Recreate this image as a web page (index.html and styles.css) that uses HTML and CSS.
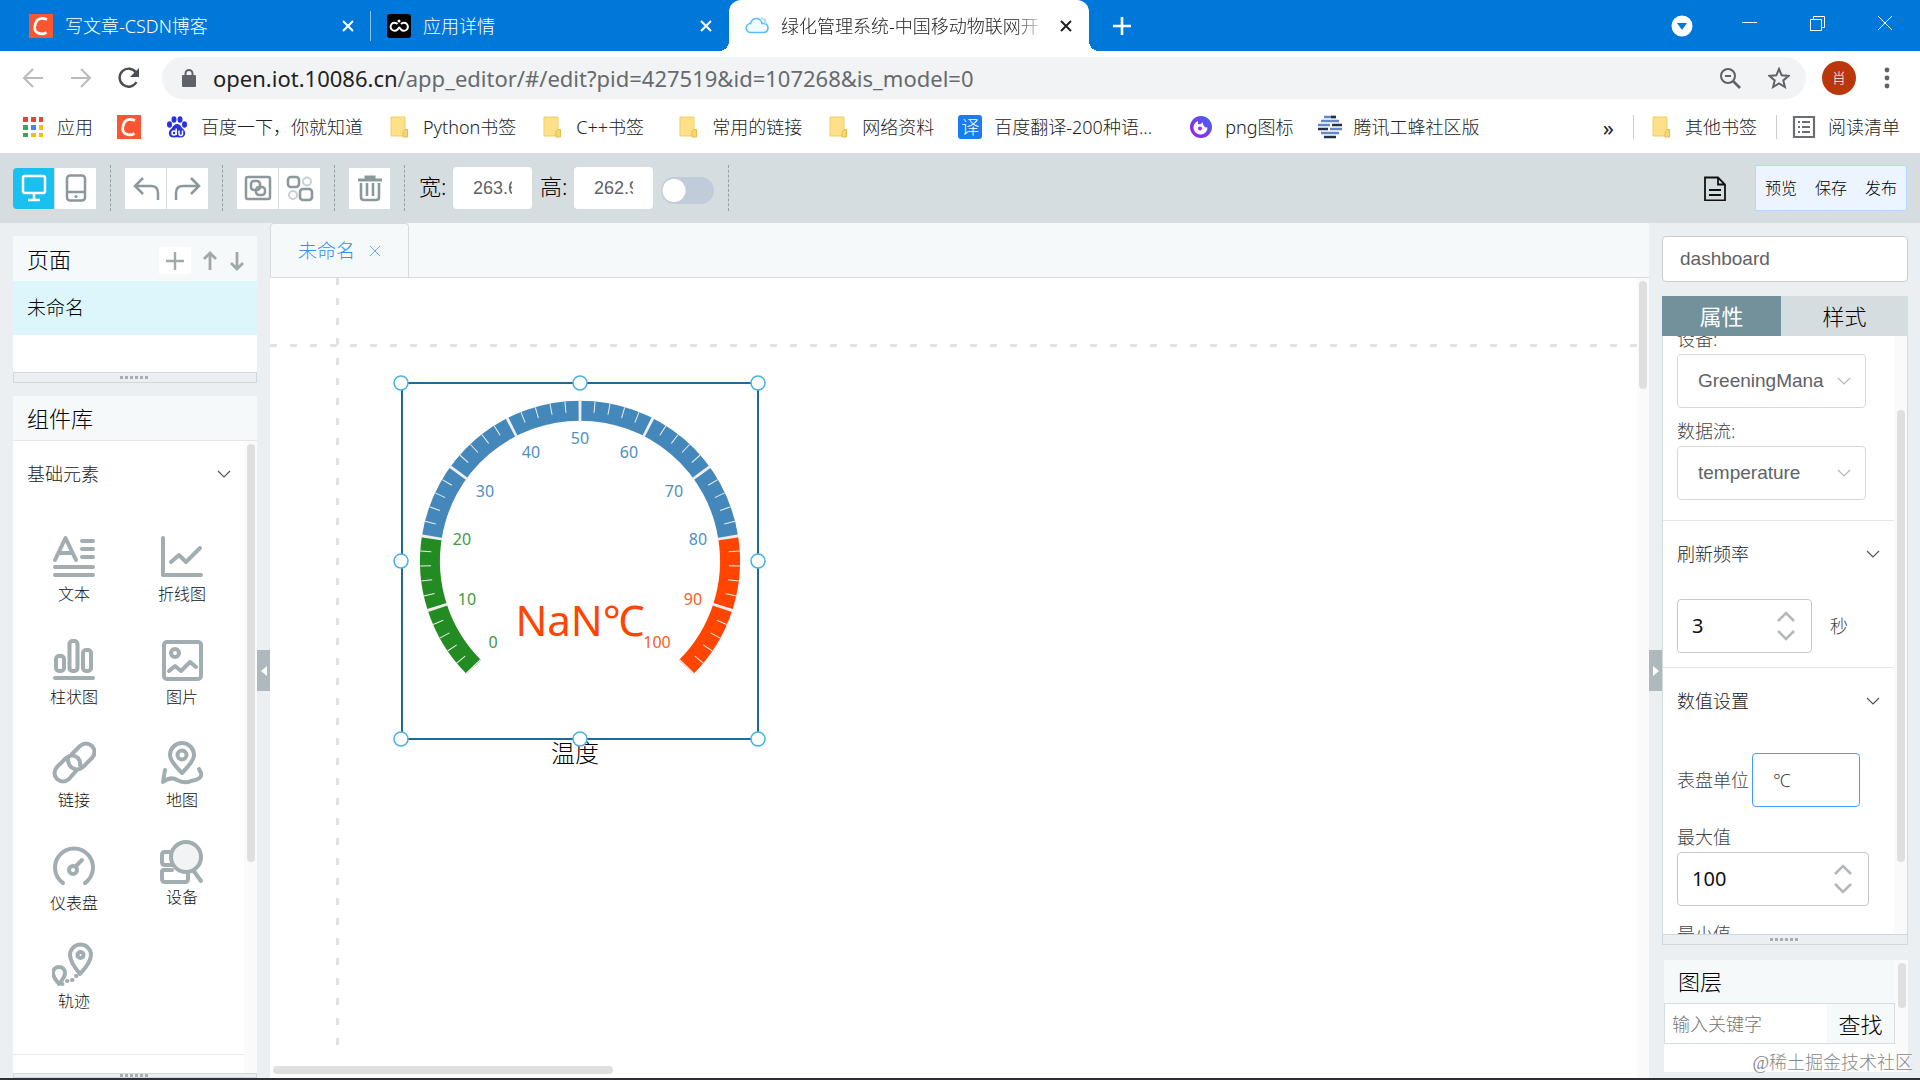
FILE: index.html
```html
<!DOCTYPE html>
<html lang="zh-CN">
<head>
    <meta charset="UTF-8">
    <meta name="viewport" content="width=device-width, initial-scale=1.0">
    <title>绿化管理系统-中国移动物联网开放平台</title>
    <link rel="stylesheet" href="styles.css">
</head>
<body>
    <!-- 公用图标 -->
    <svg class="symbols" aria-hidden="true">
        <symbol id="folder" viewBox="0 0 24 24">
            <path d="M4 2h14v19H4z" fill="#ffe08a" stroke="#f0cd62"/>
            <path d="M18 14.500h2.500V22H16v-4q0-2 2-3.500z" fill="#f7d774" stroke="#e5bd4c"/>
        </symbol>
        <symbol id="close" viewBox="0 0 14 14">
            <path d="M2 2l10 10M12 2L2 12" fill="none" stroke="currentColor" stroke-width="2"/>
        </symbol>
        <symbol id="chevron" viewBox="0 0 14 8">
            <path d="M1 1l6 6 6-6" fill="none" stroke="currentColor" stroke-width="1.200"/>
        </symbol>
        <symbol id="csdn" viewBox="0 0 24 24">
            <path d="M0 0h24v24H0z" fill="#fc5531"/>
            <path d="M18 5.500Q9 2 6.500 9.500T9 19q4 2 8.500-.5" fill="none" stroke="#fff" stroke-width="2.600"/>
        </symbol>
    </svg>

    <!-- 浏览器标签栏 -->
    <div class="tabbar">
        <div class="tab tab-first">
            <svg class="icon24"><use href="#csdn"/></svg>
            <span class="tab-title">写文章-CSDN博客</span>
            <button class="tab-close" aria-label="关闭"><svg><use href="#close"/></svg></button>
        </div>
        <div class="tab">
            <svg class="icon24" viewBox="0 0 24 24">
                <rect width="24" height="24" rx="3" fill="#000"/>
                <g fill="none" stroke="#fff" stroke-width="2"><path d="M10.500 10a4 4 0 1 0 0 5.500L12.500 13"/><path d="M14 10a4 4 0 1 1 0 5.500L12 13"/></g>
                <circle cx="12" cy="7" r="1.500" fill="#fff"/>
            </svg>
            <span class="tab-title">应用详情</span>
            <button class="tab-close" aria-label="关闭"><svg><use href="#close"/></svg></button>
        </div>
        <div class="tab tab-active">
            <svg class="icon24" viewBox="0 0 24 24">
                <path d="M6 18.500a4.500 4.500 0 0 1-.5-9Q7 4 12 4.500q4 .5 5 5 6-.5 6 4.500 0 4.500-5 4.500z" fill="#f2fbff" stroke="#59bdf0" stroke-width="1.600"/>
                <path d="M16 4l4 2 1 4" fill="none" stroke="#a8e4f5" stroke-width="2"/>
            </svg>
            <span class="tab-title">绿化管理系统-中国移动物联网开</span>
            <button class="tab-close" aria-label="关闭"><svg><use href="#close"/></svg></button>
        </div>
        <button class="new-tab" aria-label="新标签页"><svg viewBox="0 0 18 18"><path d="M9 0v18M0 9h18" stroke="#fff" stroke-width="2.600"/></svg></button>
        <div class="window-buttons">
            <button aria-label="搜索标签页"><svg viewBox="0 0 22 22"><circle cx="11" cy="11" r="10.500" fill="#fff"/><path d="M6 8h10l-5 7z" fill="#0078d9"/></svg></button>
            <button aria-label="最小化"><svg viewBox="0 0 22 22"><path d="M3 7.500h15" stroke="#fff"/></svg></button>
            <button aria-label="还原"><svg viewBox="0 0 22 22"><path d="M3.500 4.500h11v11h-11zM6.500 4V1.500h11v11H15" fill="none" stroke="#fff"/></svg></button>
            <button aria-label="关闭窗口"><svg viewBox="0 0 22 22"><path d="M3 1l14 14M17 1L3 15" stroke="#fff"/></svg></button>
        </div>
    </div>

    <!-- 地址栏 -->
    <div class="addressbar">
        <div class="nav">
            <button aria-label="后退"><svg viewBox="0 0 22 22"><path d="M21 11H2M11 2l-9 9 9 9" fill="none" stroke="#b8babd" stroke-width="2"/></svg></button>
            <button aria-label="前进"><svg viewBox="0 0 22 22"><path d="M1 11h19M11 2l9 9-9 9" fill="none" stroke="#b8babd" stroke-width="2"/></svg></button>
            <button aria-label="刷新"><svg viewBox="0 0 22 22"><path d="M18.500 15A9 9 0 1 1 18 5.500" fill="none" stroke="#4a4d51" stroke-width="2.400"/><path d="M21 1v9h-9z" fill="#4a4d51"/></svg></button>
        </div>
        <div class="url">
            <svg class="lock" viewBox="0 0 14 18"><path d="M1 7h12v10H1z" fill="#5f6368" stroke="#5f6368" stroke-width="2" stroke-linejoin="round"/><path d="M3.500 7V4.500a3.500 3.500 0 0 1 7 0V7" fill="none" stroke="#5f6368" stroke-width="2"/></svg>
            <p class="url-text"><b>open.iot.10086.cn</b>/app_editor/#/edit?pid=427519&amp;id=107268&amp;is_model=0</p>
            <button aria-label="缩放"><svg viewBox="0 0 22 22"><g fill="none" stroke="#5f6368" stroke-width="2"><circle cx="9" cy="9" r="7"/><path d="M6 9h6"/><path d="M14 14l7 7" stroke-width="2.600"/></g></svg></button>
            <button aria-label="收藏"><svg viewBox="0 0 22 22"><path d="M11 2l2.700 6.300 6.800.6-5.200 4.500 1.600 6.600-5.900-3.500L5.100 20l1.600-6.600-5.200-4.500 6.800-.6z" fill="none" stroke="#5f6368" stroke-width="2"/></svg></button>
        </div>
        <button class="avatar">肖</button>
        <button class="menu" aria-label="菜单"><svg viewBox="0 0 6 24"><g fill="#5f6368"><circle cx="3" cy="4" r="2.400"/><circle cx="3" cy="12" r="2.400"/><circle cx="3" cy="20" r="2.400"/></g></svg></button>
    </div>

    <!-- 书签栏 -->
    <nav class="bookmarks">
        <a href="#">
            <svg class="icon24" viewBox="0 0 24 24"><path d="M2 2h5v5H2zM10 2h5v5h-5zM18 2h4v5h-4z" fill="#ea4335"/><path d="M2 10h5v5H2zM2 18h5v4H2z" fill="#34a853"/><path d="M10 10h5v5h-5z" fill="#4285f4"/><path d="M18 10h4v5h-4zM10 18h5v4h-5zM18 18h4v4h-4z" fill="#fbbc05"/></svg>应用</a>
        <a href="#" aria-label="CSDN"><svg class="icon24"><use href="#csdn"/></svg></a>
        <a href="#">
            <svg class="icon24" viewBox="0 0 24 24"><g fill="#2932e1"><ellipse cx="4.500" cy="9.500" rx="2.500" ry="3.200"/><ellipse cx="9" cy="4.500" rx="2.500" ry="3.300"/><ellipse cx="15" cy="4.500" rx="2.500" ry="3.300"/><ellipse cx="19.500" cy="9.500" rx="2.500" ry="3.200"/><path d="M12 9q3 0 5 4 4 3 3 6.500-1 3.500-5 3-3-.6-6 0-4 .5-5-3Q3 16 7 13q2-4 5-4z"/></g><g fill="none" stroke="#fff" stroke-width="1.500"><circle cx="9" cy="18" r="2"/><path d="M11.200 13.500v6.500M14 15.500v3q0 2 2 2 1.500 0 1.500-2v-3"/></g></svg>百度一下，你就知道</a>
        <a href="#"><svg class="icon24"><use href="#folder"/></svg>Python书签</a>
        <a href="#"><svg class="icon24"><use href="#folder"/></svg><span class="short-name">C++书签</span></a>
        <a href="#"><svg class="icon24"><use href="#folder"/></svg>常用的链接</a>
        <a href="#"><svg class="icon24"><use href="#folder"/></svg>网络资料</a>
        <a href="#"><span class="fanyi">译</span><span class="long-name">百度翻译-200种语...</span></a>
        <a href="#">
            <svg class="icon24" viewBox="0 0 24 24"><defs><linearGradient id="pngFill" x1="1" y1="0" x2="0" y2="1"><stop offset="0" stop-color="#3d6bf0"/><stop offset="1" stop-color="#a516e8"/></linearGradient></defs><circle cx="12" cy="12" r="11" fill="url(#pngFill)"/><path d="M9 6a7 7 0 1 0 9.500 6.500q-4 .5-5-5.500-1.500 3-4.500 2z" fill="#fff"/><circle cx="11" cy="13.500" r="2" fill="#b326df"/></svg>png图标</a>
        <a href="#">
            <svg class="icon24" viewBox="0 0 24 24"><g stroke-width="2.500"><path d="M6 2h12M3 6h18M3 18h18" stroke="#6686c8"/><path d="M13 2h5M0 14h10M6 22h12M14 10h10" stroke="#263044"/><path d="M0 10h12M12 14h12" stroke="#6686c8"/></g></svg>腾讯工蜂社区版</a>
        <button class="more" aria-label="更多书签">»</button>
        <a class="divided" href="#"><svg class="icon24"><use href="#folder"/></svg>其他书签</a>
        <a class="divided" href="#"><svg class="icon24" viewBox="0 0 24 24"><path d="M2 2h20v20H2z" fill="none" stroke="#6b6e72" stroke-width="2.200"/><path d="M6 7h2M6 12h2M6 17h2M10 7h8M10 12h8M10 17h8" stroke="#6b6e72" stroke-width="2.200"/></svg>阅读清单</a>
    </nav>

    <!-- 编辑器工具栏 -->
    <header class="toolbar">
        <div class="tool-group">
            <button class="tool tool-on" aria-label="电脑"><svg viewBox="0 0 28 28"><g fill="none" stroke="#fff" stroke-width="2.500"><rect x="3" y="2" width="22" height="17" rx="2"/><path d="M14 19v7M8 26h12"/></g></svg></button>
            <button class="tool" aria-label="手机"><svg viewBox="0 0 28 28"><g fill="none" stroke="#8b999d" stroke-width="2.500"><rect x="5" y="1.500" width="18" height="25" rx="3"/><path d="M5 18h18"/></g><circle cx="14" cy="22.500" r="1.600" fill="#8b999d"/></svg></button>
        </div>
        <div class="tool-group">
            <button class="tool" aria-label="撤销"><svg viewBox="0 0 28 28"><path d="M11 4l-8 8 8 8M3 12h16q7 0 7 7v7" fill="none" stroke="#8b999d" stroke-width="2.500"/></svg></button>
            <button class="tool" aria-label="重做"><svg viewBox="0 0 28 28"><path d="M17 4l8 8-8 8M25 12H9q-7 0-7 7v7" fill="none" stroke="#8b999d" stroke-width="2.500"/></svg></button>
        </div>
        <div class="tool-group">
            <button class="tool" aria-label="组合"><svg viewBox="0 0 28 28"><g fill="none" stroke="#8b999d" stroke-width="2.500"><rect x="2" y="3" width="24" height="22" rx="2"/><rect x="7" y="7" width="9" height="9" rx="3"/><rect x="12" y="13" width="9" height="8" rx="3"/></g></svg></button>
            <button class="tool" aria-label="取消组合"><svg viewBox="0 0 28 28"><g fill="none" stroke="#8b999d" stroke-width="2.600"><rect x="2" y="3" width="11" height="10" rx="3"/><rect x="14" y="15" width="12" height="11" rx="3"/></g><g fill="none" stroke="#c9d0d2" stroke-width="2"><circle cx="21" cy="7.500" r="4"/><circle cx="7" cy="21" r="4"/></g></svg></button>
        </div>
        <div class="tool-group">
            <button class="tool" aria-label="删除"><svg viewBox="0 0 28 28"><path d="M2 6h24M10 5V3h8v2" fill="none" stroke="#8b999d" stroke-width="3"/><path d="M5 9v14q0 3 3 3h12q3 0 3-3V9M11 9v13M17 9v13" fill="none" stroke="#8b999d" stroke-width="2.600"/></svg></button>
        </div>
        <div class="tool-group size-group">
            <label for="width">宽:</label>
            <input type="text" id="width" value="263.6">
            <label for="height">高:</label>
            <input type="text" id="height" value="262.9">
            <input type="checkbox" class="switch" aria-label="锁定比例">
        </div>
        <button class="doc" aria-label="文档"><svg viewBox="0 0 24 26"><path d="M2 2.500h13l7 7v16H2zM15 2.500v7h7M6 15h12M6 20h12" fill="none" stroke="#111" stroke-width="1.800"/></svg></button>
        <div class="publish">
            <button>预览</button>
            <button>保存</button>
            <button>发布</button>
        </div>
    </header>

    <main class="editor">
        <!-- 左侧栏 -->
        <aside class="side side-left">
            <section class="panel">
                <div class="panel-head">
                    <h2>页面</h2>
                    <button class="add" aria-label="添加页面"><svg viewBox="0 0 20 20"><path d="M10 1v18M1 10h18" stroke="#a0a8aa" stroke-width="2.400"/></svg></button>
                    <button aria-label="上移"><svg viewBox="0 0 20 20"><path d="M10 19V2M4 8l6-6 6 6" fill="none" stroke="#a0a8aa" stroke-width="2.800"/></svg></button>
                    <button aria-label="下移"><svg viewBox="0 0 20 20"><path d="M10 1v17M4 12l6 6 6-6" fill="none" stroke="#a0a8aa" stroke-width="2.800"/></svg></button>
                </div>
                <ul class="pages">
                    <li>未命名</li>
                </ul>
                <div class="resize"></div>
            </section>

            <section class="panel library">
                <div class="panel-head"><h2>组件库</h2></div>
                <div class="scroll-area">
                    <div class="scroll-content">
                        <button class="fold">基础元素<svg><use href="#chevron"/></svg></button>
                        <div class="components">
                            <button><svg viewBox="0 0 44 44"><path d="M3 25L13.500 3 24 25M7 18h13M30 6h11M30 14h11M30 22h11M3 32h38M3 40h38"/></svg>文本</button>
                            <button><svg viewBox="0 0 44 44"><path d="M3 3v37h38M11 27l8-7 7 7 14-14"/></svg>折线图</button>
                            <button><svg viewBox="0 0 44 44"><rect x="4" y="18" width="8" height="15" rx="3"/><rect x="17.500" y="3" width="8" height="30" rx="3"/><rect x="31" y="12" width="8" height="21" rx="3"/><path d="M3 40h38"/></svg>柱状图</button>
                            <button><svg viewBox="0 0 44 44"><rect x="4" y="4" width="37" height="37" rx="3"/><circle cx="15" cy="15" r="4"/><path d="M9 33l6-5 6 5 9-9 6 5"/></svg>图片</button>
                            <button><svg viewBox="0 0 44 44"><path d="M20 13l8-8q6-5 12 0 5 6 0 12l-9 9q-6 5-12 0M24 30l-7 8q-6 5-12 0-5-6 0-12l9-9q6-5 12 0 3 4 2 7M16 18q0 5 3 8"/></svg>链接</button>
                            <button><svg viewBox="0 0 44 44"><path d="M22 32Q10 20 10 14a12 12 0 0 1 24 0q0 6-12 18zM5 29l-2 12q8-6 14-2 8 4 14 1 12-2 10-8l-2-4"/><circle cx="22" cy="14" r="4.500"/></svg>地图</button>
                            <button><svg viewBox="0 0 44 44"><path d="M11 39a19 19 0 1 1 22 0"/><circle cx="21" cy="26" r="4"/><path d="M24 22l6-6"/></svg>仪表盘</button>
                            <button class="raised"><svg viewBox="0 0 44 44"><path d="M12 12H5q-3 0-3 3v7q0 3 3 3h7M12 30H4q-2 0-2 2v7q0 3 3 3h20q3 0 3-3v-7M33 30l8 11"/><circle cx="26" cy="17" r="15" class="glass"/></svg>设备</button>
                            <button><svg viewBox="0 0 44 44"><path d="M28 32Q18 20 18 13a10.500 10.500 0 0 1 21 0q0 7-11 19z"/><circle cx="28.500" cy="13" r="3"/><path d="M7 42Q1 35 1 31a6 6 0 0 1 12 0q0 4-6 11z"/><path d="M10 42h.5M15 39h.5M20 38h.5M24 34h.5"/></svg>轨迹</button>
                        </div>
                    </div>
                    <div class="scrollbar"><div class="thumb thumb-library"></div></div>
                </div>
                <div class="resize resize-bottom"></div>
            </section>
        </aside>
        <div class="gutter"><button aria-label="收起左侧栏"><svg viewBox="0 0 8 12"><path d="M7 1v10L1 6z" fill="#fff"/></svg></button></div>

        <!-- 画布 -->
        <section class="stage">
            <div class="stage-tabs">
                <div class="stage-tab">未命名<button aria-label="关闭页面"><svg viewBox="0 0 12 12"><path d="M1 1l10 10M11 1L1 11" stroke="#66a8ea"/></svg></button></div>
            </div>
            <div class="canvas">
                <div class="guide guide-x"></div>
                <div class="guide guide-y"></div>
                <svg class="gauge" viewBox="0 0 380 400">
                    <rect x="12" y="12" width="356" height="356" class="frame"/>
                    <g fill="none" stroke-width="20">
                        <path d="M83.900 296.100A150 150 0 0 1 41.800 166.500" stroke="#228b22"/>
                        <path d="M41.800 166.500A150 150 0 0 1 338.200 166.500" stroke="#4488bb"/>
                        <path d="M338.200 166.500A150 150 0 0 1 296.100 296.100" stroke="#ff4500"/>
                    </g>
                    <!-- 小刻度与大刻度 -->
                    <path class="tick" d="M80.700 299.300A154.500 154.500 0 1 1 299.300 299.300" pathLength="500" stroke-width="11" stroke-dasharray="0.700 9.300" stroke-dashoffset="0.350"/>
                    <path class="tick" d="M83.900 296.100A150 150 0 1 1 296.100 296.100" pathLength="1000" stroke-width="22" stroke-dasharray="4 96" stroke-dashoffset="2"/>
                    <g class="marks">
                        <g fill="#3d9a3d">
                            <text x="103" y="277">0</text>
                            <text x="77" y="234">10</text>
                            <text x="72" y="174">20</text>
                        </g>
                        <g fill="#4e8fc0">
                            <text x="95" y="126">30</text>
                            <text x="141" y="87">40</text>
                            <text x="190" y="73">50</text>
                            <text x="239" y="87">60</text>
                            <text x="284" y="126">70</text>
                            <text x="308" y="174">80</text>
                        </g>
                        <g fill="#f75c22">
                            <text x="303" y="234">90</text>
                            <text x="267" y="277">100</text>
                        </g>
                    </g>
                    <text x="190" y="265" class="reading">NaN℃</text>
                    <text x="185" y="391" class="caption">温度</text>
                    <g class="handles">
                        <circle cx="11" cy="12" r="7"/><circle cx="190" cy="12" r="7"/><circle cx="368" cy="12" r="7"/>
                        <circle cx="11" cy="190" r="7"/><circle cx="368" cy="190" r="7"/>
                        <circle cx="11" cy="368" r="7"/><circle cx="190" cy="368" r="7"/><circle cx="368" cy="368" r="7"/>
                    </g>
                </svg>
                <div class="thumb thumb-y"></div>
                <div class="thumb thumb-x"></div>
            </div>
        </section>
        <div class="gutter"><button aria-label="收起右侧栏"><svg viewBox="0 0 8 12"><path d="M1 1v10l6-5z" fill="#fff"/></svg></button></div>

        <!-- 右侧栏 -->
        <aside class="side side-right">
            <input type="text" class="name" aria-label="组件名称" value="dashboard">
            <section class="props">
                <div class="prop-tabs">
                    <button class="on">属性</button>
                    <button>样式</button>
                </div>
                <div class="scroll-area">
                    <div class="scroll-content">
                        <div class="block block-source">
                            <label for="device">设备:</label>
                            <div class="select">
                                <select id="device"><option>GreeningMana</option></select>
                                <svg><use href="#chevron"/></svg>
                            </div>
                            <label for="stream">数据流:</label>
                            <div class="select">
                                <select id="stream"><option>temperature</option></select>
                                <svg><use href="#chevron"/></svg>
                            </div>
                        </div>
                        <div class="block">
                            <button class="fold">刷新频率<svg><use href="#chevron"/></svg></button>
                            <div class="field-row">
                                <div class="stepper stepper-short">
                                    <input type="text" id="rate" value="3">
                                    <svg viewBox="0 0 18 30"><path d="M1 10l8-8 8 8M1 20l8 8 8-8" fill="none" stroke="#b5b8bb" stroke-width="2.600"/></svg>
                                </div>
                                <label for="rate">秒</label>
                            </div>
                        </div>
                        <div class="block">
                            <button class="fold">数值设置<svg><use href="#chevron"/></svg></button>
                            <div class="field-row unit-row">
                                <label for="unit">表盘单位</label>
                                <input type="text" id="unit" value="℃">
                            </div>
                            <label for="max">最大值</label>
                            <div class="stepper">
                                <input type="text" id="max" value="100">
                                <svg viewBox="0 0 18 30"><path d="M1 10l8-8 8 8M1 20l8 8 8-8" fill="none" stroke="#b5b8bb" stroke-width="2.600"/></svg>
                            </div>
                            <label for="min">最小值</label>
                            <div class="stepper">
                                <input type="text" id="min">
                            </div>
                        </div>
                    </div>
                    <div class="scrollbar"><div class="thumb thumb-props"></div></div>
                </div>
                <div class="resize"></div>
            </section>
            <section class="layers">
                <div class="scroll-content">
                    <h2>图层</h2>
                    <div class="search">
                        <input type="text" placeholder="输入关键字" aria-label="输入关键字">
                        <button>查找</button>
                    </div>
                </div>
                <div class="scrollbar"><div class="thumb thumb-layers"></div></div>
            </section>
        </aside>
    </main>
    <p class="watermark">@稀土掘金技术社区</p>
</body>
</html>
```
FILE: styles.css
```css
/* 基础 */
* {
    box-sizing: border-box;
}

body {
    margin: 0;
    height: 100vh;
    display: flex;
    flex-direction: column;
    overflow: hidden;
    font-family: "Noto Sans", "Noto Sans CJK SC", sans-serif;
    font-size: 18px;
    font-weight: 300;
    line-height: 24px;
    color: #111;
    background: #ebeff2;
    border-bottom: 2px solid #2f3036;
}

button, input, select {
    font: inherit;
    color: inherit;
}

button {
    padding: 0;
    border: none;
    background: none;
    display: flex;
    align-items: center;
    justify-content: center;
}

h2, p, ul {
    margin: 0;
    padding: 0;
}

h2 {
    font-size: 22px;
    font-weight: 300;
    color: #000;
}

a {
    color: inherit;
    text-decoration: none;
}

.symbols {
    position: absolute;
    width: 0;
    height: 0;
}

.icon24 {
    width: 24px;
    height: 24px;
    flex: none;
}

/* 标签栏 */
.tabbar {
    display: flex;
    align-items: center;
    height: 51px;
    flex: none;
    background: #0078d9;
    color: #fff;
}

.tab {
    display: flex;
    align-items: center;
    gap: 12px;
    width: 358px;
    height: 51px;
    padding: 0 16px;
}

.tab-first {
    width: 371px;
    padding-left: 29px;
    background: linear-gradient(#8cc4f0, #8cc4f0) right center / 1px 30px no-repeat;
}

.tab-title {
    flex: 1;
    white-space: nowrap;
}

.tab-close svg {
    width: 14px;
    height: 14px;
}

.tab-active {
    position: relative;
    width: 360px;
    background: #fff;
    color: #222;
    border-radius: 12px 12px 0 0;
}

.tab-active .tab-title {
    -webkit-mask-image: linear-gradient(90deg, #000 88%, transparent);
    mask-image: linear-gradient(90deg, #000 88%, transparent);
}

.tab-active::before, .tab-active::after {
    content: "";
    position: absolute;
    bottom: 0;
    width: 10px;
    height: 10px;
}

.tab-active::before {
    left: -10px;
    background: radial-gradient(circle at 0 0, transparent 10px, #fff 10px);
}

.tab-active::after {
    right: -10px;
    background: radial-gradient(circle at 100% 0, transparent 10px, #fff 10px);
}

.new-tab {
    margin-left: 24px;
}

.new-tab svg {
    width: 18px;
    height: 18px;
}

.window-buttons {
    display: flex;
    margin-left: auto;
}

.window-buttons button {
    width: 68px;
    height: 50px;
}

.window-buttons svg {
    width: 22px;
    height: 22px;
}

/* 地址栏 */
.addressbar {
    display: flex;
    align-items: center;
    height: 54px;
    flex: none;
    padding: 0 30px 0 22px;
    background: #fff;
}

.nav {
    display: flex;
    gap: 26px;
    margin-right: 22px;
}

.nav svg, .url button svg {
    width: 22px;
    height: 22px;
}

.url {
    flex: 1;
    display: flex;
    align-items: center;
    gap: 27px;
    height: 42px;
    margin-right: 16px;
    padding: 0 16px 0 20px;
    border-radius: 21px;
    background: #f1f3f4;
}

.lock {
    width: 14px;
    height: 18px;
}

.url-text {
    flex: 1;
    margin-left: -10px;
    font-size: 22px;
    font-weight: 400;
    color: #666a6e;
}

.url-text b {
    font-weight: 400;
    color: #222;
}

.avatar {
    width: 34px;
    height: 34px;
    border-radius: 50%;
    background: #bb360b;
    color: #fff;
    font-size: 14px;
}

.menu {
    margin-left: 28px;
}

.menu svg {
    width: 6px;
    height: 24px;
}

/* 书签栏 */
.bookmarks {
    display: flex;
    align-items: center;
    gap: 24px;
    height: 48px;
    flex: none;
    padding: 0 20px 4px 21px;
    background: #fff;
    color: #222;
    white-space: nowrap;
}

.bookmarks a {
    display: flex;
    align-items: center;
    gap: 12px;
}

.fanyi {
    width: 24px;
    height: 24px;
    border-radius: 3px;
    background: #1b7cf2;
    color: #fff;
    text-align: center;
}

.short-name {
    width: 76px;
}

.long-name {
    width: 171px;
}

.more {
    margin-left: auto;
    font-size: 22px;
    font-weight: 400;
}

.bookmarks .divided {
    margin-left: -5px;
    padding-left: 16px;
    background: linear-gradient(#ccc, #ccc) left center / 1px 24px no-repeat;
}

/* 编辑器工具栏 */
.toolbar {
    display: flex;
    align-items: center;
    height: 70px;
    flex: none;
    padding: 0 13px;
    background: #d6dde0;
}

.tool-group {
    display: flex;
    align-items: center;
    gap: 1px;
    height: 46px;
    margin-right: 14px;
    padding-right: 14px;
    border-right: 1px dashed #98a0a3;
}

.tool {
    width: 41px;
    height: 41px;
    background: #fff;
}

.tool-on {
    border-radius: 4px 0 0 4px;
    background: #1ac0ef;
}

.tool svg {
    width: 28px;
    height: 28px;
}

.size-group {
    gap: 8px;
}

.size-group label {
    width: 26px;
    padding-bottom: 4px;
    font-size: 22px;
    color: #000;
    white-space: nowrap;
}

.size-group input[type="text"] {
    width: 79px;
    height: 42px;
    padding: 0 20px;
    border: none;
    border-radius: 4px;
    background: #fff;
    font-family: "Liberation Sans", sans-serif;
    color: #606266;
}

/* 锁定比例开关 */
.switch {
    appearance: none;
    width: 53px;
    height: 27px;
    margin: 4px 0 0;
    border-radius: 14px;
    background: radial-gradient(circle at 13px 50%, #fff 11px, transparent 12px) #c0ccda;
}

.doc {
    margin-left: auto;
    margin-right: 28px;
}

.doc svg {
    width: 24px;
    height: 26px;
}

.publish {
    display: flex;
    border: 1px solid #b3d8ff;
    border-radius: 0 3px 3px 0;
    background: #ecf5ff;
}

.publish button {
    width: 50px;
    height: 44px;
    font-size: 16px;
    color: #000;
}

/* 主体布局 */
.editor {
    flex: 1;
    display: flex;
    min-height: 0;
}

.side {
    display: flex;
    flex-direction: column;
    gap: 13px;
    flex: none;
    padding-top: 13px;
}

.side-left {
    width: 257px;
    padding-left: 13px;
}

.side-right {
    gap: 14px;
    width: 258px;
    padding-right: 12px;
}

.gutter {
    width: 13px;
    flex: none;
    display: flex;
    align-items: center;
}

.gutter button {
    width: 13px;
    height: 41px;
    margin-top: 40px;
    background: #adb9bd;
}

.gutter svg {
    width: 8px;
    height: 12px;
}

.resize {
    display: flex;
    align-items: center;
    justify-content: center;
    height: 11px;
    flex: none;
    border: 1px solid #cfd8dc;
    background: #ebeff2;
}

/* 拖动条上的小点 */
.resize::before {
    content: "";
    width: 30px;
    height: 3px;
    background: repeating-linear-gradient(90deg, #a9adb0 0 3px, transparent 3px 5px);
}

.resize-bottom {
    height: 5px;
}

/* 左侧面板 */
.panel-head {
    display: flex;
    align-items: center;
    height: 45px;
    flex: none;
    padding: 0 7px 0 14px;
    background: #f5f9fa;
}

.panel-head h2 {
    flex: 1;
}

.panel-head button {
    width: 27px;
    height: 27px;
    margin-top: 4px;
}

.panel-head .add {
    width: 32px;
    margin-right: 5px;
    background: #fff;
}

.panel-head svg {
    width: 20px;
    height: 20px;
}

.pages {
    height: 91px;
    background: #fff;
    list-style: none;
}

.pages li {
    height: 54px;
    padding-left: 14px;
    line-height: 54px;
    background: #dcf6fc;
    color: #000;
    font-size: 19px;
}

.library {
    flex: 1;
    display: flex;
    flex-direction: column;
    min-height: 0;
}

.library .panel-head {
    border-bottom: 1px solid #e2e8ea;
}

.scroll-area {
    flex: 1;
    display: flex;
    min-height: 0;
    overflow: hidden;
    background: #fff;
}

.scroll-content {
    flex: 1;
    min-width: 0;
}

.scrollbar {
    width: 13px;
    flex: none;
    padding: 3px 3px 0;
    background: #fafafa;
}

.thumb {
    width: 8px;
    border-radius: 4px;
    background: #dfdfdf;
}

.thumb-library {
    height: 418px;
}

.fold {
    width: 100%;
    height: 66px;
    padding: 0 13px 0 14px;
    justify-content: space-between;
    color: #222;
}

.fold svg {
    width: 14px;
    height: 8px;
    color: #555;
}

.components {
    display: grid;
    grid-template-columns: 108px 108px;
    grid-template-rows: 103px 103px 103px 98px 103px;
    padding: 28px 0 9px 7px;
    border-bottom: 1px solid #e8eaec;
}

.components button {
    flex-direction: column;
    justify-content: flex-start;
    gap: 3px;
    font-size: 16px;
}

.components svg {
    width: 44px;
    height: 44px;
    fill: none;
    stroke: #a1adb0;
    stroke-width: 4;
    stroke-linecap: round;
    stroke-linejoin: round;
}

.components .raised {
    gap: 1px;
    margin-top: -4px;
}

.glass {
    fill: #f2f3f4;
}

/* 画布 */
.stage {
    flex: 1;
    display: flex;
    flex-direction: column;
    min-width: 0;
}

.stage-tabs {
    height: 55px;
    flex: none;
    background: #f5f9fa;
    border-bottom: 1px solid #d3dce0;
}

.stage-tab {
    display: flex;
    align-items: center;
    gap: 14px;
    width: 139px;
    height: 54px;
    padding-left: 27px;
    border: 1px solid #d3dce0;
    border-bottom: none;
    border-radius: 4px 4px 0 0;
    color: #3a90e8;
    font-size: 19px;
}

.stage-tab svg {
    width: 12px;
    height: 12px;
}

.canvas {
    position: relative;
    flex: 1;
    background: linear-gradient(#fafafa, #fafafa) right / 12px 100% no-repeat #fff;
}

.guide {
    position: absolute;
}

.guide-x {
    top: 66px;
    left: 0;
    right: 12px;
    height: 3px;
    background: repeating-linear-gradient(90deg, #e2e2e2 0 7px, transparent 7px 20px);
}

.guide-y {
    top: 0;
    left: 66px;
    bottom: 20px;
    width: 3px;
    background: repeating-linear-gradient(#e2e2e2 0 7px, transparent 7px 20px);
}

.gauge {
    position: absolute;
    left: 120px;
    top: 93px;
    width: 380px;
    height: 400px;
}

.frame {
    fill: none;
    stroke: #206b96;
    stroke-width: 2;
}

.tick {
    fill: none;
    stroke: #eee;
}

.marks text, .reading, .caption {
    text-anchor: middle;
}

.marks {
    font-size: 16px;
    font-weight: 400;
}

.reading {
    font-size: 42px;
    font-weight: 400;
    fill: #ff4500;
}

.caption {
    font-size: 24px;
    fill: #000;
}

.handles {
    fill: #fff;
    stroke: #45b0e6;
    stroke-width: 1.5;
}

.thumb-y {
    position: absolute;
    top: 3px;
    right: 2px;
    height: 108px;
}

.thumb-x {
    position: absolute;
    left: 3px;
    bottom: 4px;
    width: 340px;
    height: 8px;
}

/* 右侧属性 */
.name {
    width: 100%;
    height: 46px;
    flex: none;
    padding: 0 17px;
    border: 1px solid #c8cdd2;
    border-radius: 4px;
    background: #fff;
    font-family: "Liberation Sans", sans-serif;
    font-size: 19px;
    color: #606266;
}

.props {
    display: flex;
    flex-direction: column;
    flex: 1;
    min-height: 0;
}

.props .scroll-area {
    border-left: 1px solid #d6dde0;
    border-right: 1px solid #d6dde0;
}

.prop-tabs {
    display: flex;
    flex: none;
}

.prop-tabs button {
    flex: 1;
    height: 40px;
    background: #d6dde0;
    color: #000;
    font-size: 22px;
}

.prop-tabs .on {
    flex: none;
    width: 119px;
    background: #72919a;
    color: #fff;
    font-weight: 400;
}

.block {
    padding: 0 14px 14px;
    border-bottom: 1px solid #e4e7e9;
}

.block label {
    display: block;
    color: #444;
    white-space: nowrap;
}

.block-source {
    margin-top: -9px;
    padding-bottom: 20px;
}

.block .fold {
    padding: 0;
}

.select {
    position: relative;
    width: 189px;
    margin: 3px 0 11px;
}

.block-source .select:last-child {
    margin-bottom: 0;
}

.select select {
    appearance: none;
    width: 100%;
    height: 54px;
    padding: 0 20px;
    border: 1px solid #d5d9de;
    border-radius: 4px;
    background: #fff;
    font-family: "Liberation Sans", sans-serif;
    font-size: 19px;
    color: #606266;
}

.select svg {
    position: absolute;
    right: 15px;
    top: 23px;
    width: 14px;
    height: 8px;
    color: #b0b4bb;
}

.field-row {
    display: flex;
    align-items: center;
    gap: 18px;
    margin-top: 12px;
}

.unit-row {
    gap: 3px;
    margin: 19px 0 18px;
}

.unit-row input {
    width: 108px;
    height: 54px;
    padding: 0 20px;
    border: 1px solid #409eff;
    border-radius: 4px;
    color: #444;
}

.stepper {
    display: flex;
    align-items: center;
    width: 192px;
    height: 54px;
    margin: 3px 0 16px;
    padding: 0 16px 0 14px;
    border: 1px solid #c5c9ce;
    border-radius: 4px;
}

.stepper-short {
    width: 135px;
    margin: 0;
}

.stepper input {
    flex: 1;
    min-width: 0;
    padding: 0;
    border: none;
    font-size: 20px;
    font-weight: 400;
}

.stepper svg {
    width: 18px;
    height: 30px;
    flex: none;
}

.thumb-props {
    height: 452px;
    margin-top: 71px;
}

/* 图层 */
.layers {
    display: flex;
    height: 112px;
    flex: none;
    margin: 1px 0 6px 2px;
    background: #fff;
}

.layers h2 {
    padding: 0 14px;
    line-height: 43px;
    background: #f5f9fa;
}

.search {
    display: flex;
    height: 41px;
    border: 1px solid #d6dde0;
}

.search input {
    flex: 1;
    min-width: 0;
    padding: 0 7px;
    border: none;
}

.search input::placeholder {
    color: #757575;
}

.search button {
    width: 67px;
    background: #f5f9fa;
    font-size: 22px;
    color: #000;
}

.thumb-layers {
    height: 45px;
}

.watermark {
    position: absolute;
    right: 7px;
    bottom: 5px;
    color: #888;
    font-family: "Liberation Serif", "Noto Sans CJK SC", serif;
}
```
